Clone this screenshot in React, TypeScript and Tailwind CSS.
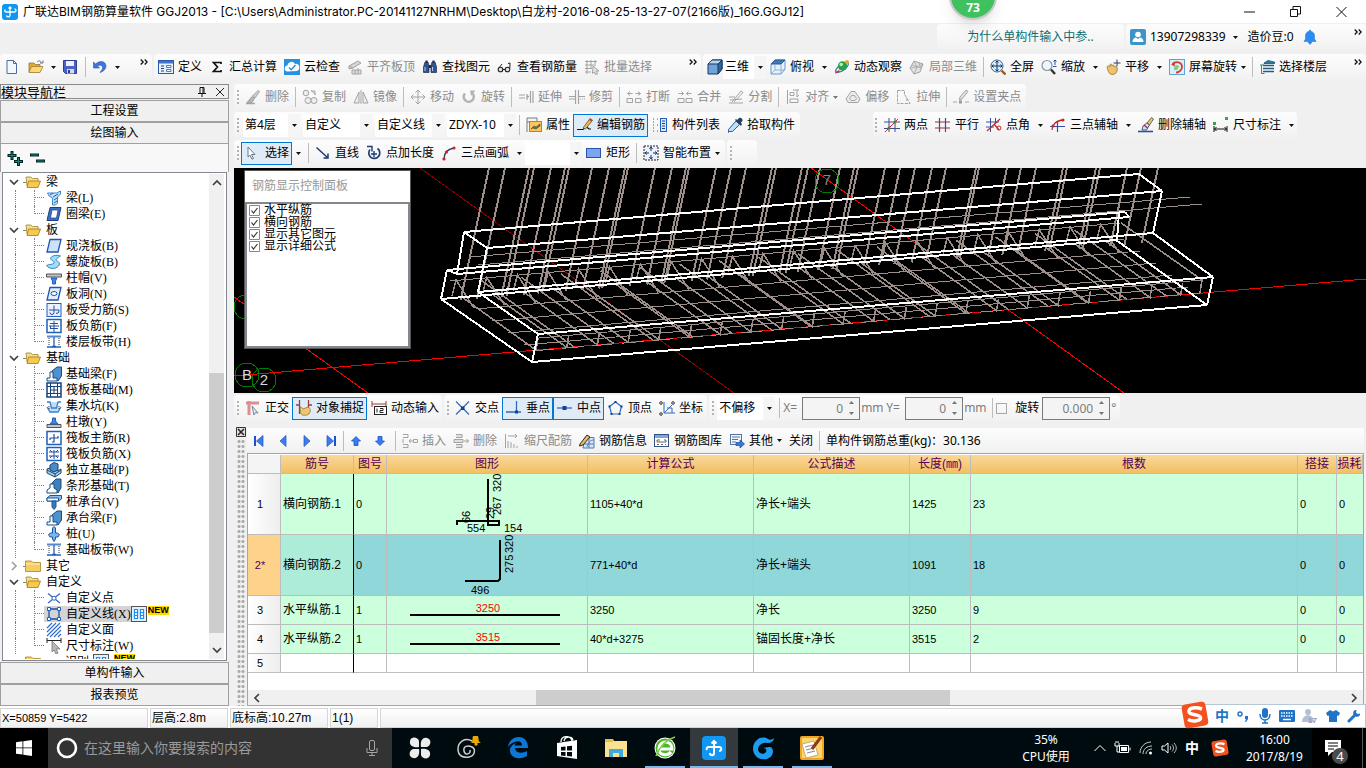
import { Fragment, ReactNode } from 'react'

const B = '#1f5fbf'
const N = '#1c3f7c'
const G = '#a3a3a3'
const R = '#c62828'

const glyphs: Record<string, ReactNode> = {
    logo: <><rect width="16" height="16" rx="3" fill="#1296f3" /><path d="M8 3v8.5a1.8 1.8 0 0 1-3.500 0M3.500 8h9a1.500 1.500 0 0 0 0-3M3.500 8a1.500 1.500 0 0 1 0-2.500M6.500 4.500 8 3l1.500 1.500" fill="none" stroke="#fff" strokeWidth="1.300" /></>,
    file: <path d="M3 1.500h6.500l3 3v10H3zM9.500 1.500v3h3" fill="#f3f8ff" stroke="#4d6b9e" />,
    open: <><path d="M1 4h5l1.500 1.500H12V13H1z" fill="#e3a83a" stroke="#8a6a20" strokeWidth=".7" /><path d="M3.500 7.500H15L12 13.500H1z" fill="#fbd974" stroke="#9a7626" strokeWidth=".7" /><path d="M9 3c2-2 4-1 4.500 1M12 4h3V1.500" fill="none" stroke="#59728f" /></>,
    save: <><path d="M1.500 1.500h13v13h-11l-2-2z" fill="#4b62c9" stroke="#2b3c91" /><path d="M4 2h8v5H4z" fill="#eef2ff" /><path d="M5 10h7v4.500H5z" fill="#d4d9ea" /><path d="M6 11h2v3H6z" fill="#2b3c91" /></>,
    undo: <path d="M1.500 3v6h6L5.500 7c3-2 6 0 5 2.500-.4 1.500-1.500 2.500-2.500 4 5-1.500 7-5.500 5.500-8.500C12 2 7.500 1.500 3.700 5z" fill="#3f76dd" stroke="#2450a8" strokeWidth=".6" />,
    define: <><rect x=".5" y="1.500" width="15" height="13" fill="#eaf2ff" stroke="#2d5aa8" /><path d="M1 2h14v2.500H1z" fill="#3f74c9" /><path d="M3 7h3M3 9.500h3M3 12h3" stroke={N} /><path d="M8.500 6.500H13v2H8.500zM8.500 10.500H13v2H8.500z" fill="#fff" stroke={B} strokeWidth=".8" /></>,
    sigma: <path d="M12 5V3.500H4.500l4 4.500-4 4.500H12V11" fill="none" stroke="#111" strokeWidth="1.700" />,
    cloud: <><rect width="16" height="16" fill="#2592e0" /><path d="M4 12.500a3 3 0 0 1-.5-6 4 4 0 0 1 7.500-1.500 3.500 3.500 0 0 1 1.500 7z" fill="#fff" /><path d="m5 8.500 2.200 2.200L11.500 6" fill="none" stroke="#2592e0" strokeWidth="1.500" /></>,
    slabtop: <><path d="m2 7 9-5 3 2-8 5zM2 7v3l4-1" fill="#d5d5d5" stroke={G} /><path d="M5 11h9v4H5zM8 11v4M11 9v6" fill="#ddd" stroke={G} /></>,
    binoc: <><path d="M3 3h3l1 4v6.500H1.500V8zM10 3h3l1.500 5v5.500H9V7z" fill="#35548c" stroke="#17294c" strokeWidth=".7" /><path d="M3.500 1.500h2v2h-2zM10.500 1.500h2v2h-2zM7 6h2v3H7z" fill="#17294c" /><path d="M3 8v4M10.500 8v4" stroke="#b7cbed" /></>,
    glasses: <><circle cx="3.500" cy="10.500" r="2.300" fill="#dbe6ef" stroke="#222" strokeWidth="1.100" /><circle cx="10.500" cy="10.500" r="2.300" fill="#dbe6ef" stroke="#222" strokeWidth="1.100" /><path d="M5.800 10.500h2.400M1.500 9.500 5 5M12.800 9.500 13 4l-2 .5" fill="none" stroke="#222" /></>,
    batch: <><path d="M1 2.500h12M1 6h9M1 9.500h7M1 13h6M3 1v14M7 1v9M11 1v6" stroke={G} fill="none" /><path d="m9 7 6 5h-3l1.500 3-2 .5L10 13l-1.500 1.500z" fill="#e3e3e3" stroke={G} /></>,
    cube: <><path d="M1 5 5 1h10v9l-4 5H1z" fill="#6fa3d8" stroke="#17375f" /><path d="M1 5 5 1h10l-4 4z" fill="#b6d4f1" stroke="#17375f" /><path d="M11 5v10l4-5V1z" fill="#2f659f" stroke="#17375f" /></>,
    cubetop: <><path d="M1 5 5 1h10v9l-4 5H1z" fill="#e7f1fb" stroke="#4e7fb5" strokeWidth=".8" /><path d="M1 5 5 1h10l-4 4z" fill="#4379b5" stroke="#2c5c93" /><path d="M11 5v10M5 5v6l-4 4M5 11h10" fill="none" stroke="#7aa5d3" strokeWidth=".8" /></>,
    orbit: <><ellipse cx="8" cy="8.500" rx="7.500" ry="3" transform="rotate(-35 8 8.500)" fill="none" stroke="#3d6fb5" strokeWidth="1.200" /><circle cx="8.500" cy="7" r="4.700" fill="#2ba14a" /><circle cx="7.200" cy="5.500" r="1.800" fill="#b5efb9" /><circle cx="13" cy="3" r="2" fill="#eda32e" /><path d="m1 13.500 4-2.500 1 1.500-4.500 2z" fill="#c03a30" /></>,
    local3d: <><path d="m1 9 4-7 9 3-3 8-6 2z" fill="#e2e2e2" stroke={G} /><path d="m3 6 9 3M5 2l3 6-3 7M9.500 3.500 12 9M1 9l7-1 6-3" fill="none" stroke={G} strokeWidth=".8" /></>,
    fullscreen: <><circle cx="7" cy="7" r="6" fill="#d7ebfa" stroke="#3e5f86" /><path d="M7 2v10M2 7h10M5.500 3.500 7 2l1.500 1.500M5.500 10.500 7 12l1.500-1.500M3.500 5.500 2 7l1.500 1.500M10.500 5.500 12 7l-1.500 1.500" fill="none" stroke="#16335f" /><path d="m11.500 11.500 4 4" stroke="#9a5b1e" strokeWidth="2.400" /></>,
    zoom: <><circle cx="6" cy="6.500" r="5" fill="#eef6fc" stroke="#8695a6" strokeWidth="1.200" /><path d="m10 10.500 4 4.500" stroke="#333" strokeWidth="2.400" /><path d="M14 1v5M12.500 2.500 14 1l1.500 1.500M12 7.500h3.500" fill="none" stroke="#163f8a" strokeWidth=".9" /></>,
    pan: <><path d="M2 8c1-2 2-1 3 0V5.500c1-1.500 2 0 2 1.500 1-2 2-1 2.200.5 1-1.500 2 0 2 1 1.300-.5 1.300 1 1 2.500C12 14 10 15.500 7 15.500S3 12 2 8z" fill="#ecc26e" stroke="#94651d" strokeWidth=".7" /><path d="M12 .5v7M8.500 4h7" stroke="#2a3e63" /></>,
    screenrot: <><rect x=".5" y=".5" width="15" height="15" fill="#d8effb" stroke="#5fa4cf" /><path d="M3.500 5c3-3.500 9.500-2 9.500 3 0 3-3 5.500-6 5.500" fill="none" stroke="#d43a2f" strokeWidth="1.800" /><path d="m2 5.500 4-2-.5 4z" fill="#d43a2f" /><path d="M5 8c2-3 5-2 5 0l-2 3H5z" fill="#8ec96f" /></>,
    floor: <><path d="M5 4 9 1.500 15.500 3v1.500H5z" fill="#2f7fa4" stroke="#153f57" strokeWidth=".7" /><path d="M4 6.500h11M4 9.500h11M4 12.500h11" stroke="#205f80" strokeWidth="1.700" /><path d="M1 6h4M2.500 6v8.500h3" fill="none" stroke="#2a9a4a" /></>,
    erase: <><path d="m13 1.500 1.500 1L10 9 7.500 7z" fill="#cfcfcf" stroke={G} /><path d="M7 7.500 9.500 9.500 7 13.500H2z" fill="#b5b5b5" stroke={G} /><path d="M1 14.500h9" stroke={G} strokeWidth="1.500" /></>,
    copy: <><circle cx="4" cy="4" r="2.800" fill="#eee" stroke={G} /><circle cx="6" cy="11.500" r="3" fill="#eee" stroke={G} /><circle cx="12" cy="11.500" r="3" fill="#eee" stroke={G} /><path d="M9 2h4v4M9 1l4.500 5" fill="none" stroke={G} /></>,
    mirror: <path d="M6 3v11H1zM10 3v11h5zM8 1v14" fill="#eee" stroke={G} />,
    move: <path d="M8 1v14M1 8h14M5.500 3.500 8 1l2.500 2.500M5.500 12.500 8 15l2.500-2.500M3.500 5.500 1 8l2.500 2.500M12.500 5.500 15 8l-2.500 2.500" fill="none" stroke={G} />,
    rotate: <><path d="M4 4.500a5 5 0 1 0 7.500 0" fill="none" stroke="#b3b3b3" strokeWidth="2.600" /><path d="M9 1.500h5.500L10 7z" fill="#b3b3b3" /></>,
    extend: <path d="M1 6h6M1 9h6M9 5v6M12.500 2v12M15 2v12M8.500 6l2 1.500-2 1.500" fill="none" stroke={G} strokeWidth="1.200" />,
    trim: <path d="M6.500 1v14M9.500 1v14M0 7.500h6.500M0 10h6.500M9.500 7.500H16M11 10h1M13 10h1M15 10h1" fill="none" stroke={G} strokeWidth="1.200" />,
    split: <path d="M1 9.500h5.500v4H1zM15 9.500H9.500v4H15zM1.500 4.500h5M9.500 4.500h5M4 2.500l-2.500 2L4 6.500M12 2.500l2.500 2-2.500 2" fill="none" stroke={G} />,
    merge: <path d="M1 9.500h6v4H1zM15 9.500H9v4h6zM1.500 4.500h5M9.500 4.500h5M4.500 2.500l2 2-2 2M11.500 2.500l-2 2 2 2" fill="none" stroke={G} />,
    divide: <path d="M1 14h14M2 11l12-1M4 13l9-11 2 1.500L6 13M1 8h6" fill="none" stroke={G} />,
    align: <path d="M2.500 1v14M5 3.500h4v3H5zM5 10h8v3.500H5zM8 1h6M12 1v7l2-2" fill="none" stroke={G} />,
    offset: <path d="M6 2.500h4L15 10l-2 3.500H3L1 10zM6.500 6.500h3l2 3-1.500 2H6l-1.500-2z" fill="#ececec" stroke={G} />,
    stretch: <path d="M1.500 1.500h7v5M1.500 1.500v13h6M9 6l5 8.500H8M11 9v3" fill="none" stroke={G} strokeDasharray="3 1" />,
    gripset: <><path d="m7 8 6-7 2 1.500L9 10l-2.500 1z" fill="#e2e2e2" stroke={G} /><path d="M0 13h4M12 13h4" stroke={G} /><path d="M6 11.500h3v3H6z" fill="#999" /></>,
    prop: <><path d="M1 1h10v4H1zM1 5v10" fill="#f5f5f5" stroke="#7a7a7a" /><rect x="3.500" y="4.500" width="12" height="10" fill="#ffc45f" stroke="#c97c1d" /><path d="m5 12 3-3 2 1 4-3v2l-4 3-3-1z" fill="#5d7f4c" stroke="#3a4c2d" strokeWidth=".6" /></>,
    pencil: <><path d="M0 12.500h6l3-3 3 2.500h2" fill="none" stroke="#111" strokeWidth="1.200" /><path d="M6 11 13 1.500l2.500 1.800L8.500 12z" fill="#eebc55" stroke="#5f4a20" strokeWidth=".8" /><path d="m12 3 2.500 1.700L15.500 3 13 1.500z" fill="#c9463a" /></>,
    list: <><path d="M1 2h2M1 5h2M1 8h2M1 11h2M1 14h2M5 2h1.500M5 8h1.500M5 14h1.500" stroke="#555" strokeDasharray="1 1" /><rect x="8.500" y="1.500" width="6" height="13" fill="#dbe9ff" stroke={B} /><path d="M10 4h3M10 6.500h3M10 9h3M10 11.500h3" stroke={N} /></>,
    pipette: <><path d="m9 4 3.500 3.500-7 7H2.500l-1 1v-3z" fill="#bfe0f8" stroke="#2a5b94" /><path d="m8 3 6 6 1-2-1.200-1.200L15.500 4c.5-2-1.500-3.800-3.500-3L10.200 3 9 2z" fill="#23405f" /></>,
    twopt: <><path d="M0 5h16M0 11.500h16M5 1v14M11 1v14" stroke="#444b8a" /><path d="m1 15 13-13" stroke={R} /><circle cx="5" cy="11" r="1.500" fill="#3a8a2c" /><circle cx="11" cy="5" r="1.500" fill="#3a8a2c" /></>,
    parallel: <><path d="M4.500 1v14M10.500 1v14" stroke="#3a4fa3" strokeWidth="1.200" /><path d="M0 5h15M0 11h15" stroke="#8d3144" strokeWidth="1.200" /></>,
    ptangle: <><path d="M0 5h13M0 10h8M4.500 1v14M9.500 1v6" stroke="#3a4fa3" /><path d="M1 14 14 2M8 7l5 6" stroke={R} strokeWidth="1.200" /><circle cx="13" cy="11" r="2" fill="none" stroke={R} /></>,
    axis3: <><path d="M0 9.500h15M7.500 4v11" stroke="#3a4fa3" strokeWidth="1.200" /><path d="M2 13c0-5 4-9.500 11-10" fill="none" stroke={R} strokeWidth="1.300" /><circle cx="13" cy="3" r="1.500" fill={R} /><circle cx="3" cy="9" r="1.500" fill={R} /></>,
    brush: <><path d="m9 6 4.500-5.500 2 1.500L11.500 8z" fill="#efc66b" stroke="#333" strokeWidth=".7" /><path d="m5 9 4-3 2.500 2-3 5H4z" fill="#d2dff8" stroke="#26385c" strokeWidth=".8" /><path d="m6 8 3.500 3" stroke={R} strokeWidth="1.500" /><path d="M0 14.500h15" stroke="#24569e" strokeWidth="1.600" /></>,
    dim: <><path d="M1 9v6M14 9v6M1 12h13M3.500 10l-2 2 2 2M11.500 10l2 2-2 2" fill="none" stroke="#111" /><path d="M0 5h3v3H0zM12 0h3v3h-3z" fill="#36a83a" /></>,
    cursor: <path d="m3 2 7 7.500H6.500l2 4-1.500.7-2-4L3 12z" fill="#fff" stroke="#68788c" />,
    line: <path d="M1.500 2.500 13 13M13 8.500V13H8.500" fill="none" stroke="#1c3c73" strokeWidth="1.500" />,
    ptlen: <><path d="M11.500 3.500A5.500 5.500 0 1 1 4 4.500" fill="none" stroke="#1c3c73" strokeWidth="1.700" /><path d="M1 1.500h5v5M8 6v6M5 9h6" fill="none" stroke="#1c3c73" strokeWidth="1.400" /></>,
    arc: <><path d="M3 14c0-6 4-10 10-11" fill="none" stroke="#1c3c73" strokeWidth="1.400" /><circle cx="3" cy="14" r="1.600" fill={R} /><circle cx="5.500" cy="7" r="1.600" fill={R} /><circle cx="13" cy="3" r="1.600" fill={R} /></>,
    rect: <rect x=".5" y="3.500" width="14" height="9" fill="#7da4ee" stroke="#2a53ad" />,
    smart: <><rect x="1" y="1" width="14" height="14" fill="#eaf1fb" stroke="#222" strokeDasharray="2 1" /><path d="M8 2v4M8 10v4M2 8h4M10 8h4M6.500 4 8 2l1.500 2M6.500 12 8 14l1.500-2M4 6.500 2 8l2 1.500M12 6.500 14 8l-2 1.500" fill="none" stroke="#17386d" /></>,
    ortho: <><path d="M1 3h13M4 1v14" stroke="#dc8f8f" strokeWidth="3" /><path d="m7 6 6 7-2.500-.5L9 15z" fill="#dfe8f5" stroke="#5c7190" strokeWidth=".8" /></>,
    snap: <><path d="M3.500 0v14M12.500 0v14M0 5h4M12 5h4" stroke="#a33b3b" strokeWidth="1.300" /><path d="M4 7c2 0 2 1 3 2l5-2c3 1 3 6 0 7.500-3 1.500-7 1-7.500-2z" fill="#f0c56e" stroke="#8d6522" strokeWidth=".7" /></>,
    dyn: <><path d="M1 1v6M15 1v6M1 4h14" stroke="#a33b3b" /><rect x="3.500" y="6.500" width="12" height="8" fill="#fff" stroke="#222" /><path d="M6 8.500v4M9 8.500h3v2H9v2h3.500" fill="none" stroke="#222" /></>,
    cross: <><path d="m1 1.500 13 13M14 1.500l-13 13" stroke="#3c6fb7" strokeWidth="1.300" /><path d="M6 6.500h3.500V10H6z" fill="#17408f" /></>,
    perp: <><path d="M0 12h15M10.500 1v12" stroke="#2f6bc0" strokeWidth="1.300" /><path d="M9 10.500h3v3H9z" fill="#17408f" /></>,
    mid: <><path d="M0 8h15" stroke="#2f6bc0" strokeWidth="1.300" /><path d="M5.500 6h4v4h-4z" fill="#17408f" /></>,
    vertex: <><path d="m7.500 2 6 4.500-2 7.500h-8l-2-7.500z" fill="none" stroke="#2f6bc0" strokeWidth="1.200" /><path d="M6.500 1h2v2h-2zM.5 5.500h2v2h-2zM12.500 5.500h2v2h-2zM2.500 13h2v2h-2zM10.500 13h2v2h-2z" fill="#17408f" /></>,
    coord: <><path d="M5 2v11h11M5 13 13 5M8 8h5v5" fill="none" stroke="#2f6bc0" /><circle cx="2" cy="3" r="1.300" fill="none" stroke="#333" /><circle cx="14" cy="3" r="1.300" fill="none" stroke="#333" /><circle cx="2" cy="14" r="1.300" fill="none" stroke="#333" /></>,
    first: <><path d="M4 3v10" stroke="#1c52c7" strokeWidth="2" /><path d="M12 2.500v11L5.500 8z" fill="#3c7ded" stroke="#1c52c7" strokeWidth=".7" /></>,
    prev: <path d="M11 2.500v11L5 8z" fill="#3c7ded" stroke="#1c52c7" strokeWidth=".7" />,
    next: <path d="M5 2.500v11L11 8z" fill="#3c7ded" stroke="#1c52c7" strokeWidth=".7" />,
    last: <><path d="M12 3v10" stroke="#1c52c7" strokeWidth="2" /><path d="M4 2.500v11L10.500 8z" fill="#3c7ded" stroke="#1c52c7" strokeWidth=".7" /></>,
    up: <path d="M8 3.500 12.500 8H10v4.500H6V8H3.500z" fill="#3c7ded" stroke="#1c52c7" strokeWidth=".8" />,
    down: <path d="M8 12.500 3.500 8H6V3.500h4V8h2.500z" fill="#3c7ded" stroke="#1c52c7" strokeWidth=".8" />,
    insert: <path d="M1 1.500h5v3H1M1 11.500h5v3H1M1 6v4M7 8h4M9 6 7 8l2 2M11.500 6.500h4v3h-4z" fill="none" stroke={G} />,
    remove: <path d="M3 1.500h6v3H3M3 11.500h6v3H3M1 6.500h9v3H1zM11 8h4.500M13.500 6l2 2-2 2" fill="#e0e0e0" stroke={G} />,
    scale: <path d="M1.500 1v14M4 3h9M11 1l2 2-2 2M4 8v7M7 9v6M10 11v4M13 13v2" fill="none" stroke={G} />,
    info: <><path d="M6 4.500h9V15H4z" fill="#d8e6f8" stroke="#4f7cb5" /><path d="M5 11h10M10 5v10M15 7c-4 0-6 3-7 7" fill="none" stroke="#4f7cb5" /><path d="m1 11 7-9 3 2-7 8-3.500 1z" fill="#e9ba5c" stroke="#2c2c2c" /></>,
    gallery: <><rect x=".5" y="1.500" width="14" height="12" fill="#fff" stroke="#33527f" /><path d="M1 2h13v3H1z" fill="#7da5dd" /><path d="M3 7h3M3 7v2h9V7h-2M3 11.500h2M7 11.500h2M11 11.500h1" fill="none" stroke="#666" /></>,
    other: <><rect x="1.500" y="1.500" width="11" height="10" fill="#f2f6fc" stroke="#54739f" /><path d="M3 4h8M3 6.500h6M3 9h4" stroke="#54739f" /><path d="M7 9.500h4V7l4.500 4-4.500 4v-2.500H7z" fill="#3a78d9" stroke="#1c478e" strokeWidth=".7" /></>,
    folder: <><path d="M.5 3h6L8 4.500h7.500V13.500H.5z" fill="#f6cd62" stroke="#a88428" strokeWidth=".8" /><path d="M1 6h14" stroke="#fff0b8" /></>,
    folderopen: <><path d="M1 3h5l1.500 1.500H13V12H2z" fill="#f4dc94" stroke="#a88428" strokeWidth=".8" /><path d="M3.500 7H15.500L13 13.500H2z" fill="#f9c94c" stroke="#9c7720" strokeWidth=".8" /></>,
    beam: <><path d="M1.500 3h9l4-2v3l-3 3v6l-2 2H6.500V8L3 6z" fill="#bfe0f8" stroke="#3e86c8" /><path d="m4 5 3-2M7 7l5-3M8 10l3-2M8 13l3-2" stroke="#1763b2" /></>,
    ring: <><path d="M4 1.500h11L12 14.500H1z" fill="#3e6fc0" stroke="#1b3f87" /><path d="M6 4h6l-1.500 8H4.500z" fill="#fff" stroke="#1b3f87" strokeWidth=".7" /></>,
    slab: <path d="M4 1.500h11L12 14H1z" fill="#cfe1f8" stroke="#1f56b0" strokeWidth="1.300" />,
    spiral: <path d="M14.500 2C9 0 3 3 5 5.500 6 7 9 7 8 9c-1.500 2-5 1-7.500 2.500 2 3.500 9 4 12 .5 2.500-3-.5-4.500-2-5.500C9 5 12 3.500 14.500 2z" fill="#a5dcf5" stroke="#2488c9" />,
    capcol: <><path d="M.5 4h15v3H.5z" fill="#c4c4c4" stroke="#555" /><path d="M5 8h6l-1.500 3v3h-3v-3z" fill="#3f86de" stroke={B} /></>,
    hole: <><path d="M4 1.500h11L12 14H1z" fill="#e2eefc" stroke="#1f56b0" strokeWidth="1.300" /><ellipse cx="8" cy="7.500" rx="3" ry="2" fill="#fff" stroke="#1f56b0" /></>,
    rebarS: <><rect x="1" y="1.500" width="14" height="13" fill="#e8f1fd" stroke={B} /><path d="M3 8h10M8 3.500v7a2 2 0 0 1-4 0M13 8c0 3-1.500 4-3 3" fill="none" stroke="#244f9b" /></>,
    rebarF: <><rect x="1" y="1.500" width="14" height="13" fill="#fff" stroke={B} strokeWidth="1.500" /><path d="M4 5.500h8M4 10.500h8M8 3v11M3 8h10M4.500 8v2.500" fill="none" stroke="#244f9b" /></>,
    strip: <><path d="M1 2.500h14M1 13h14" stroke="#5489cf" strokeWidth="2" /><path d="M3 4v8M13 4v8" stroke="#333" strokeDasharray="1 1" /><path d="M8 3v10M6 12.500h4" stroke={B} strokeWidth="1.300" /></>,
    fbeam: <><path d="M6 11V5l5-4h4.500v9L12 15z" fill="#4e92cd" stroke="#164f86" /><path d="M1 15v-3h3V6h3v6h4v3z" fill="#fff" stroke="#164f86" /></>,
    raft: <><rect x="1" y="1" width="14" height="14" fill="#fff" stroke="#163f7c" strokeWidth="1.500" /><path d="M1 4.500h14M1 11.500h14M4.500 1v14M11.500 1v14M4.500 8h7M8 4.500v7" stroke="#163f7c" /></>,
    pit: <><path d="M1 4h3l1.500 6h5L12 4h3M1 9l3 5h8l3-5" fill="#c2def7" stroke="#3680cb" strokeWidth="1.300" /><path d="M3 8v3M13 8v3" stroke="#333" strokeDasharray="1 1" /></>,
    pier: <><path d="M1 13.500h14v-3H1z" fill="#c4c4c4" stroke="#555" /><path d="M4 10h8l-2.500-3V4h-3v3z" fill="#3f86de" stroke={B} /></>,
    rebarR: <><rect x="1" y="1.500" width="14" height="13" fill="#fff" stroke={B} strokeWidth="1.500" /><path d="M4 8h8v-2M8 4v8H6M4 8v2" fill="none" stroke="#244f9b" strokeWidth="1.200" /></>,
    rebarX: <><rect x="1" y="1.500" width="14" height="13" fill="#fff" stroke={B} strokeWidth="1.500" /><path d="M3 6h10M3 10h10M8 4v9M4 4l2 2M12 4l-2 2M4 12l2-2M12 12l-2-2" fill="none" stroke="#244f9b" /></>,
    isolate: <><path d="m1 7 3-1 8 3 3-2v4l-6 4-8-4z" fill="#a9d0f0" stroke="#17466f" /><path d="m4 3 4-2.500L12 2v6L8 10 4 8z" fill="#4c8ac4" stroke="#17466f" /><path d="m1 8 8 4 6-4M9 12v3" fill="none" stroke="#17466f" /></>,
    stripf: <><path d="M6 10V5l4-4h5v9l-3 5z" fill="#3f80bd" stroke="#164f86" /><path d="M1 15v-3l3-2V6h4v4l3 2v3z" fill="#fff" stroke="#164f86" /></>,
    pilecap: <><path d="M1 4 4 1.500h11.500V5l-3 2H1z" fill="#8fc0ee" stroke="#1b5799" /><path d="M1 4h11.500v3H1z" fill="#fff" stroke="#1b5799" /><path d="M6 7h4v6l-2 2.500L6 13z" fill="#3a78c4" stroke="#1b5799" /></>,
    pile: <path d="M6.500 2 8 .5 9.500 2v5h2l2 1.500L12 11H9.500v2L8 15.500 6.500 13v-2H4L2.500 8.500 4.500 7h2z" fill="#7db4ea" stroke="#1c55a0" />,
    cpoint: <><path d="M2 3.500 14 13M14 3.500 2 13" stroke="#2c69be" strokeWidth="1.200" /><circle cx="8" cy="8.200" r="2" fill="#fff" stroke="#2c69be" /></>,
    cline: <><path d="M3 3h10v10H3z" fill="none" stroke="#1f4f9f" strokeWidth="1.300" /><path d="M1.500 1.500h3v3h-3zM11.500 1.500h3v3h-3zM1.500 11.500h3v3h-3zM11.500 11.500h3v3h-3z" fill="#fff" stroke={B} /></>,
    cface: <path d="m1 6 5-5M1 10l9-9M1 14l13-13M4 15 15 4M8 15l7-7M12 15l3-3" stroke="#2f6bc9" strokeWidth="1.100" />,
    dimcur: <><path d="M1 0v5M15 0v5M1 2.500h14" stroke="#222" /><path d="m6 3 8 8h-4l2 4-2 1-2-4-2 2z" fill="#b9b9b9" stroke="#777" strokeWidth=".8" /></>,
    grid: <><rect x=".5" y=".5" width="15" height="15" fill="#dff0ff" stroke="#555" /><path d="M3.500 3.500h3v9h-3zM9.500 3.500h3v9h-3zM3 6.500h4M3 9.500h4M9 6.500h4M9 9.500h4" fill="#fff" stroke="#1e8df0" strokeWidth="1.200" /></>,
    user: <><rect width="16" height="16" rx="2" fill="#3c95c8" /><circle cx="8" cy="5.500" r="2.800" fill="#fff" /><path d="M2.500 13c0-3 2-4.500 3.500-4.500L8 10l2-1.500c1.500 0 3.500 1.500 3.500 4.500z" fill="#fff" /></>,
    bell: <path d="M7.500 1h1v1.200c3 .5 4 2.500 4 5V10l1.500 2.500H2L3.500 10V7c0-2.500 1-4.300 4-4.800zM6 13h4l-2 2.500z" fill="#2a8bf0" stroke="#1b6fd0" strokeWidth=".5" />,
}

function Glyph({ name, className = 'size-4' }: { name: string; className?: string }) {
    return <svg viewBox="0 0 16 16" className={`${className} shrink-0`} aria-hidden="true">{glyphs[name]}</svg>
}

function Arrow({ dim }: { dim?: boolean }) {
    return <svg viewBox="0 0 5 3" className="h-[3px] w-[5px] shrink-0" aria-hidden="true"><path d="M0 0h5L2.500 3z" fill={dim ? '#777' : '#111'} /></svg>
}

function Grip() {
    return (
        <span className="flex w-[7px] shrink-0 flex-col items-center gap-0.5">
            {[0, 1, 2, 3].map((i) => <i key={i} className="size-0.5 bg-[#b4b4b4]" />)}
        </span>
    )
}

function Sep({ tight }: { tight?: boolean }) {
    return <span className={`h-5 w-px shrink-0 bg-[#bdbdbd] ${tight ? '' : 'mr-0.5 ml-[3px]'}`} />
}

function Bar({ children, className = '' }: { children: ReactNode; className?: string }) {
    return <div className={`flex h-[26px] shrink-0 items-center rounded-sm bg-linear-to-b from-[#fdfdfd] to-[#f1f1f1] ${className}`}>{children}</div>
}

type ToolProps = { icon?: string; label: string; off?: boolean; on?: boolean; menu?: 'wide' | 'tight' }

function Tool({ icon, label, off, on, menu }: ToolProps) {
    return (
        <button disabled={off} className={`flex h-[23px] shrink-0 items-center gap-1 pr-[3px] pl-1 ${off ? 'text-[#8b8b8b]' : ''} ${on ? 'bg-[#dfebf6] ring-1 ring-[#0078d7] ring-inset' : ''}`}>
            {icon && <Glyph name={icon} />}
            <span>{label}</span>
            {menu && <span className={menu === 'wide' ? 'flex w-[9px] justify-end' : 'flex w-[5px]'}><Arrow dim={off} /></span>}
        </button>
    )
}

function Tools({ items }: { items: (ToolProps | '|')[] }) {
    return <>{items.map((it, i) => (it === '|' ? <Sep key={i} /> : <Tool key={i} {...it} />))}</>
}

function Combo({ label, value, className }: { label: string; value: string; className: string }) {
    return (
        <label className={`flex h-[23px] shrink-0 items-center bg-white ${className}`}>
            <select aria-label={label} defaultValue={value} className="h-full min-w-0 flex-1 appearance-none bg-transparent pl-0.5 outline-none">
                <option>{value}</option>
            </select>
            <span className="flex h-full w-3 items-center justify-center bg-[#f5f5f5]"><Arrow /></span>
        </label>
    )
}

function Spin({ label, value, className }: { label: string; value: string; className: string }) {
    return (
        <span className={`flex h-[23px] shrink-0 items-center border border-[#7a7a7a] bg-[#f4f4f4] ${className}`}>
            <input aria-label={label} defaultValue={value} className="h-full min-w-0 flex-1 bg-transparent text-right text-[#7d7d7d] outline-none" />
            <span className="flex w-4 flex-col items-center gap-2">
                <i className="rotate-180"><Arrow dim /></i>
                <Arrow dim />
            </span>
        </span>
    )
}

function More() {
    return (
        <button aria-label="更多" className="mt-[5px] self-start">
            <svg viewBox="0 0 8 6" className="h-1.5 w-2"><path d="m.7.5 2.500 2.500-2.500 2.500M4.700.5 7.200 3 4.700 5.500" fill="none" stroke="#111" strokeWidth="1.300" /></svg>
        </button>
    )
}

const windowIcons = [
    { label: '最小化', d: 'M0 6h11' },
    { label: '还原', d: 'M.5 3.500h7v7h-7zM3 3V.5h7.500V8H8' },
    { label: '关闭', d: 'M.5 1l10 10M10.500 1l-10 10' },
]

function TitleBar() {
    return (
        <header className="flex h-[23px] shrink-0 items-center bg-white pr-0.5 pl-0.5">
            <Glyph name="logo" />
            <h1 className="ml-[5px] flex-1 font-[Inter,'Noto_Sans_CJK_SC',sans-serif]">广联达BIM钢筋算量软件 GGJ2013 - [C:\Users\Administrator.PC-20141127NRHM\Desktop\白龙村-2016-08-25-13-27-07(2166版)_16G.GGJ12]</h1>
            {windowIcons.map((w) => (
                <button key={w.label} aria-label={w.label} className="flex w-[46px] justify-center">
                    <svg viewBox="0 0 11 12" className="h-3 w-[11px]"><path d={w.d} fill="none" stroke="#111" /></svg>
                </button>
            ))}
        </header>
    )
}

function AccountRow() {
    return (
        <div className="flex h-[31px] shrink-0 justify-end gap-0.5 pt-px">
            <Bar className="h-7 w-[187px] justify-center"><a href="#faq" className="text-[#0c6e72]">为什么单构件输入中参..</a></Bar>
            <Bar className="h-7 w-[240px] gap-1 pl-1">
                <Glyph name="user" />
                <button className="flex items-center gap-[7px]">13907298339 <Arrow /></button>
                <span className="ml-1.5">造价豆:0</span>
                <Glyph name="bell" className="ml-1 size-4" />
                <span className="ml-auto flex h-full pr-1"><More /></span>
            </Bar>
        </div>
    )
}

function MainToolbar() {
    return (
        <div className="flex h-[30px] shrink-0 gap-0.5">
            <Bar className="h-7 w-[152px] pl-1">
                <button aria-label="新建" className="pr-2"><Glyph name="file" /></button>
                <button aria-label="打开" className="flex items-center gap-[7px] pr-1.5"><Glyph name="open" /><Arrow /></button>
                <button aria-label="保存" className="pr-1"><Glyph name="save" /></button>
                <Sep />
                <button aria-label="撤销" className="flex items-center gap-[7px] pl-1"><Glyph name="undo" /><Arrow /></button>
                <span className="ml-auto flex h-full pr-1"><More /></span>
            </Bar>
            <Bar className="h-7 w-[547px]">
                <Tools items={[
                    { icon: 'define', label: '定义' },
                    { icon: 'sigma', label: '汇总计算' },
                    { icon: 'cloud', label: '云检查' },
                    { icon: 'slabtop', label: '平齐板顶', off: true },
                    { icon: 'binoc', label: '查找图元' },
                    { icon: 'glasses', label: '查看钢筋量' },
                    { icon: 'batch', label: '批量选择', off: true },
                ]} />
                <span className="ml-auto flex h-full pr-1"><More /></span>
            </Bar>
            <Bar className="h-7 flex-1 pl-1">
                <Glyph name="cube" />
                <Combo label="视图" value="三维" className="w-[43px]" />
                <Tools items={[
                    { icon: 'cubetop', label: '俯视', menu: 'wide' },
                    { icon: 'orbit', label: '动态观察' },
                    { icon: 'local3d', label: '局部三维', off: true },
                    '|',
                    { icon: 'fullscreen', label: '全屏' },
                    { icon: 'zoom', label: '缩放', menu: 'wide' },
                    { icon: 'pan', label: '平移', menu: 'wide' },
                    { icon: 'screenrot', label: '屏幕旋转', menu: 'tight' },
                    '|',
                    { icon: 'floor', label: '选择楼层' },
                ]} />
                <span className="ml-auto flex h-full pr-1"><More /></span>
            </Bar>
        </div>
    )
}

function EditToolbars() {
    return (
        <>
            <div className="flex h-7 shrink-0">
                <Bar className="pr-0.5">
                    <Grip />
                    <Tools items={[
                        { icon: 'erase', label: '删除', off: true }, '|',
                        { icon: 'copy', label: '复制', off: true },
                        { icon: 'mirror', label: '镜像', off: true }, '|',
                        { icon: 'move', label: '移动', off: true },
                        { icon: 'rotate', label: '旋转', off: true }, '|',
                        { icon: 'extend', label: '延伸', off: true },
                        { icon: 'trim', label: '修剪', off: true }, '|',
                        { icon: 'split', label: '打断', off: true },
                        { icon: 'merge', label: '合并', off: true },
                        { icon: 'divide', label: '分割', off: true }, '|',
                        { icon: 'align', label: '对齐', off: true, menu: 'tight' },
                        { icon: 'offset', label: '偏移', off: true },
                        { icon: 'stretch', label: '拉伸', off: true }, '|',
                        { icon: 'gripset', label: '设置夹点', off: true },
                    ]} />
                </Bar>
            </div>
            <div className="flex h-7 shrink-0">
                <Bar className="pr-0.5">
                    <Grip />
                    <span className="ml-0.5 flex items-center gap-[3px]">
                        <Combo label="楼层" value="第4层" className="w-[57px]" />
                        <Combo label="构件类型" value="自定义" className="w-[69px]" />
                        <Combo label="构件种类" value="自定义线" className="w-[69px]" />
                        <Combo label="构件" value="ZDYX-10" className="w-[69px]" />
                    </span>
                    <Tools items={[
                        '|',
                        { icon: 'prop', label: '属性' },
                        { icon: 'pencil', label: '编辑钢筋', on: true },
                        { icon: 'list', label: '构件列表' },
                        { icon: 'pipette', label: '拾取构件' },
                    ]} />
                </Bar>
                <Bar className="mr-[69px] ml-auto">
                    <Grip />
                    <Tools items={[
                        { icon: 'twopt', label: '两点' },
                        { icon: 'parallel', label: '平行' },
                        { icon: 'ptangle', label: '点角', menu: 'wide' },
                        { icon: 'axis3', label: '三点辅轴', menu: 'wide' },
                        { icon: 'brush', label: '删除辅轴' },
                        { icon: 'dim', label: '尺寸标注', menu: 'wide' },
                    ]} />
                </Bar>
            </div>
            <div className="flex h-7 shrink-0 gap-0.5">
                <Bar className="pr-0.5">
                    <Grip />
                    <Tools items={[{ icon: 'cursor', label: '选择', on: true }]} />
                    <button aria-label="选择方式" className="px-1"><Arrow /></button>
                    <Tools items={[
                        '|',
                        { icon: 'line', label: '直线' },
                        { icon: 'ptlen', label: '点加长度' },
                        { icon: 'arc', label: '三点画弧', menu: 'wide' },
                    ]} />
                    <Combo label="半径" value="" className="w-[57px]" />
                    <Tools items={[
                        { icon: 'rect', label: '矩形' }, '|',
                        { icon: 'smart', label: '智能布置', menu: 'tight' },
                    ]} />
                </Bar>
                <Bar className="w-[30px]"><Grip /></Bar>
            </div>
        </>
    )
}

type Leaf = [icon: string, label: string]
const tree: { label: string; leaves: Leaf[] }[] = [
    { label: '梁', leaves: [['beam', '梁(L)'], ['ring', '圈梁(E)']] },
    { label: '板', leaves: [['slab', '现浇板(B)'], ['spiral', '螺旋板(B)'], ['capcol', '柱帽(V)'], ['hole', '板洞(N)'], ['rebarS', '板受力筋(S)'], ['rebarF', '板负筋(F)'], ['strip', '楼层板带(H)']] },
    { label: '基础', leaves: [['fbeam', '基础梁(F)'], ['raft', '筏板基础(M)'], ['pit', '集水坑(K)'], ['pier', '柱墩(Y)'], ['rebarR', '筏板主筋(R)'], ['rebarX', '筏板负筋(X)'], ['isolate', '独立基础(P)'], ['stripf', '条形基础(T)'], ['pilecap', '桩承台(V)'], ['fbeam', '承台梁(F)'], ['pile', '桩(U)'], ['strip', '基础板带(W)']] },
    { label: '其它', leaves: [] },
    { label: '自定义', leaves: [['cpoint', '自定义点'], ['cline', '自定义线(X)'], ['cface', '自定义面'], ['dimcur', '尺寸标注(W)']] },
]

const NewTag = () => <b className="ml-px h-[9px] self-start bg-[#ffd800] font-['Liberation_Sans'] text-[9px] leading-[9px] font-bold">NEW</b>

function Chevron({ open, className = '' }: { open?: boolean; className?: string }) {
    return <svg viewBox="0 0 10 10" className={`size-2.5 shrink-0 ${className}`} aria-hidden="true"><path d={open ? 'M1 3l4 4 4-4' : 'M3 1l4 4-4 4'} fill="none" stroke={open ? '#404040' : '#a0a0a0'} strokeWidth="1.700" /></svg>
}

function Tree() {
    return (
        <div className="mx-0.5 flex min-h-0 flex-1 border border-[#828790] bg-white pt-px pr-0.5 pb-px">
            <ul className="min-w-0 flex-1 overflow-hidden font-[Liberation_Serif,'Noto_Sans_CJK_SC',serif] leading-4">
                {tree.map((group) => (
                    <li key={group.label}>
                        <div className="flex h-4 items-center pl-1.5">
                            <Chevron open={group.leaves.length > 0} />
                            <i className="ml-1 w-0.5 border-b border-dotted border-[#808080]" />
                            <Glyph name={group.leaves.length ? 'folderopen' : 'folder'} />
                            <span className="ml-[5px]">{group.label}</span>
                        </div>
                        <ul>
                            {group.leaves.map(([icon, label], i) => {
                                const selected = label === '自定义线(X)'
                                return (
                                    <li key={label} className="flex h-4 items-center pl-3">
                                        <i className="h-full w-[19px] border-l border-dotted border-[#808080]" />
                                        <i className={`flex h-full w-2.5 flex-col ${i < group.leaves.length - 1 ? 'border-l border-dotted border-[#808080]' : ''}`}>
                                            <i className={`h-1/2 border-b border-dotted border-[#808080] ${i === group.leaves.length - 1 ? 'border-l' : ''}`} />
                                        </i>
                                        <span className={`flex items-center gap-1 pl-0.5 ${selected ? 'bg-[#d4d4d4]' : ''}`}>
                                            <Glyph name={icon} />{label}
                                        </span>
                                        {selected && <><Glyph name="grid" /><NewTag /></>}
                                    </li>
                                )
                            })}
                        </ul>
                    </li>
                ))}
                <li className="flex h-4 items-center gap-1 pl-[22px]"><Glyph name="folder" /><span className="pl-5">识别</span><Glyph name="grid" /><NewTag /></li>
            </ul>
            <div className="flex w-[15px] flex-col items-center bg-[#f0f0f0]">
                <Chevron open className="my-1 rotate-180" />
                <div className="flex w-full flex-1 flex-col justify-end"><div className="h-[59%] bg-[#cdcdcd]" /></div>
                <Chevron open className="mt-3 mb-1" />
            </div>
        </div>
    )
}

const navButton = 'h-[22px] w-full shrink-0 border border-[#a0a0a0] bg-[#f0f0f0] text-center'

function Sidebar() {
    return (
        <aside className="flex w-[229px] shrink-0 flex-col">
            <div className="flex h-[15px] items-center border border-[#8a8a8a] leading-3">
                <h2 className="flex-1 text-[13px]">模块导航栏</h2>
                <button aria-label="固定" className="mr-2.5"><svg viewBox="0 0 8 10" className="h-2.5 w-2"><path d="M2 .5h4V6M2 .5V6M5 1v5M0 6.500h8M4 7v3" fill="none" stroke="#111" /></svg></button>
                <button aria-label="关闭导航栏" className="mr-1"><svg viewBox="0 0 8 8" className="size-2"><path d="m0 0 8 8M8 0 0 8" stroke="#222" /></svg></button>
            </div>
            <button className={`${navButton} mt-px`}>工程设置</button>
            <button className={navButton}>绘图输入</button>
            <div className="flex h-[28px] shrink-0 items-center gap-1.5 border-x border-[#a0a0a0] bg-[#f8f8f8] pl-1.5">
                <button aria-label="全部展开"><svg viewBox="0 0 16 15" className="h-[15px] w-4"><path d="M5 0v9M.500 4.500h9M11.500 6v9M7 10.500h9" stroke="#022" strokeWidth="3" /><path d="M5 1v7M1.500 4.500h7M11.500 7v7M8 10.500h7" stroke="#12897c" /></svg></button>
                <button aria-label="全部折叠"><svg viewBox="0 0 16 15" className="h-[15px] w-4"><path d="M1 4h9M7 10h9" stroke="#022" strokeWidth="3" /><path d="M2 4h7M8 10h7" stroke="#12897c" /></svg></button>
            </div>
            <Tree />
            <button className={`${navButton} mt-px`}>单构件输入</button>
            <button className={navButton}>报表预览</button>
        </aside>
    )
}

type Pt = [number, number]
const white: [Pt, Pt][] = [
    [[532, 362], [1207, 305]], [[538, 334], [1213, 277]], [[538, 334], [532, 362]], [[1213, 277], [1207, 305]],
    [[441, 299], [532, 362]], [[447, 270], [441, 299]], [[441, 299], [1116, 240]], [[478, 292], [1153, 233]],
    [[478, 292], [538, 334]], [[447, 270], [1125, 212]], [[457, 274], [1129, 217]], [[447, 270], [457, 274]],
    [[464, 232], [1139, 174]], [[487, 248], [1162, 191]], [[464, 232], [487, 248]], [[464, 232], [457, 274]],
    [[487, 248], [478, 292]], [[1139, 174], [1162, 191]], [[1162, 191], [1153, 233]], [[1153, 233], [1213, 277]],
    [[1116, 240], [1207, 305]], [[1125, 212], [1129, 217]], [[1119, 213], [1117, 240]],
]
const barTops = [489, 505, 529, 534, 551, 565, 569, 592, 609, 625, 628, 655, 672, 686, 689, 716, 731, 746, 772, 776, 802, 808, 820, 840, 854, 858, 885, 900, 915, 932, 946, 976, 979, 1007, 1021, 1036, 1063, 1067, 1096, 1100, 1127, 1141, 1158]
const redY = (x: number) => 376 - 0.0857 * (x - 234)

function Scene() {
    return (
        <svg viewBox="234 168 1132 225" preserveAspectRatio="xMinYMin slice" className="size-full" shapeRendering="crispEdges" role="img" aria-label="三维钢筋视图">
            <path d="M234 376 1366 279M234 297 368 393M811 168 1124 393" stroke="#f00" />
            <path d="M420 168 734 393" stroke="#900000" />
            <g stroke="#9c8e89" strokeWidth="1" fill="none">
                {[0, 1, 2, 3, 4].map((i) => {
                    const dx = i * 16, dy = i * 12
                    return <path key={i} d={`M${460 + dx} ${297 + dy}L${1124 + dx} ${239 + dy}`} />
                })}
                <path d="M469 257 1190 197M478 265 1202 204M450 281 1120 223M539 338 1202 280" />
            </g>
            <g stroke="#9c8e89" strokeWidth="2" fill="none">
                {barTops.map((x) => {
                    const dy = 132 - (x - 489) * 0.085
                    return <path key={x} d={`M${x} 168L${x - dy * 0.215} ${168 + dy}`} />
                })}
            </g>
            <g stroke="#9c8e89" strokeWidth="1.600" fill="none">
                {Array.from({ length: 22 }, (_, i) => {
                    const x = 536 + i * 30.7
                    const y = redY(x)
                    const px = 456 + i * 30.7
                    const py = 280 - i * 2.65
                    return (
                        <Fragment key={i}>
                            <path d={`M${x + 2} ${y - 12}L${x} ${y}L${x - 74} ${y - 53}`} />
                            <path d={`M${px - 4} ${py + 16}L${px} ${py}L${px + 18} ${py + 28}`} />
                        </Fragment>
                    )
                })}
                {Array.from({ length: 16 }, (_, i) => {
                    const x = 574 + i * 39.5
                    return <path key={i} d={`M${x} ${redY(x)}L${x - 92} ${redY(x) - 66}`} />
                })}
                <path d="M1121 223 1202 280 1200 293" />
            </g>
            <path d="M532 351 1200 293" stroke="#9c8e89" strokeDasharray="22 8" />
            {white.map(([a, b], i) => <path key={i} d={`M${a[0]} ${a[1]}L${b[0]} ${b[1]}`} stroke="#fff" strokeWidth="2" />)}
            <g fill="none" stroke="#007a00">
                <circle cx="247" cy="375" r="12" /><circle cx="264" cy="380" r="12" /><circle cx="246" cy="307" r="12" /><circle cx="827" cy="181" r="12" />
            </g>
            <g fill="#d8d8d8" fontFamily="Liberation Sans, sans-serif" fontSize="15" textAnchor="middle">
                <text x="247" y="380">B</text><text x="264" y="385">2</text><text x="827" y="185" fill="#888">7</text>
            </g>
        </svg>
    )
}

function Viewport() {
    return (
        <section className="relative min-h-0 flex-1 overflow-hidden bg-black">
            <Scene />
            <div className="absolute top-0.5 left-2.5 flex h-[179px] w-[167px] flex-col border border-[#555] bg-white">
                <h2 className="h-[31px] pl-[7px] leading-[29px] text-[#999]">钢筋显示控制面板</h2>
                <div className="flex-1 border-2 border-[#828790] pl-0.5">
                    {['水平纵筋', '横向钢筋', '显示其它图元', '显示详细公式'].map((t) => (
                        <label key={t} className="flex h-3 items-center gap-1 leading-3">
                            <input type="checkbox" defaultChecked className="peer sr-only" />
                            <svg viewBox="0 0 11 11" className="size-[11px] shrink-0"><path d="M.5.5h10v10H.5z" fill="#fff" stroke="#888" /><path d="M2.500 5.500 4.500 8l4-5" fill="none" stroke="#333" strokeWidth="1.200" /></svg>
                            {t}
                        </label>
                    ))}
                </div>
            </div>
        </section>
    )
}

function SnapBar() {
    return (
        <div className="flex h-8 shrink-0 gap-0.5 pt-0.5">
            <Bar>
                <Grip />
                <Tools items={[{ icon: 'ortho', label: '正交' }, { icon: 'snap', label: '对象捕捉', on: true }, { icon: 'dyn', label: '动态输入' }]} />
            </Bar>
            <Bar className="pr-px">
                <Grip />
                <Tools items={[{ icon: 'cross', label: '交点' }, { icon: 'perp', label: '垂点', on: true }, { icon: 'mid', label: '中点', on: true }, { icon: 'vertex', label: '顶点' }, { icon: 'coord', label: '坐标' }]} />
            </Bar>
            <Bar className="gap-px pr-1 text-[#7d7d7d]">
                <Grip />
                <Combo label="偏移方式" value="不偏移" className="w-[58px] text-black" />
                <Sep />
                <span className="w-[18px]">X=</span>
                <Spin label="X" value="0" className="w-[58px]" />
                <span className="w-6">mm</span>
                <span className="w-[18px]">Y=</span>
                <Spin label="Y" value="0" className="w-[58px]" />
                <span className="w-6">mm</span>
                <Sep />
                <label className="mr-0.5 flex items-center gap-2 text-black">
                    <input type="checkbox" className="size-[11px] appearance-none border border-[#a8a8a8]" />旋转
                </label>
                <Spin label="角度" value="0.000" className="w-[68px]" />
                <span>°</span>
            </Bar>
        </div>
    )
}

const dimText = { fontFamily: 'Liberation Sans, sans-serif', fontSize: 11 }

const shapeL1 = (
    <svg viewBox="0 0 200 60" className="h-[60px] w-[200px]">
        <path d="M101 5v41M70 51v-4h42v4h-11v-4" fill="none" stroke="#000" strokeWidth="2" />
        <g {...dimText}>
            <text x="80" y="58">554</text><text x="117" y="58">154</text>
            <text transform="translate(114 41) rotate(-90)">267</text><text transform="translate(114 18) rotate(-90)">320</text>
            <text transform="translate(83 49) rotate(-90)">66</text><text transform="translate(107 45) rotate(-90)">29</text>
        </g>
    </svg>
)
const shapeL2 = (
    <svg viewBox="0 0 200 60" className="h-[60px] w-[200px]">
        <path d="M113 5v39l-2 2H78" fill="none" stroke="#000" strokeWidth="2" />
        <g {...dimText}>
            <text x="84" y="59">496</text>
            <text transform="translate(126 38) rotate(-90)">275</text><text transform="translate(126 18) rotate(-90)">320</text>
        </g>
    </svg>
)
const straight = (n: string) => (
    <svg viewBox="0 0 200 28" className="h-7 w-[200px]">
        <path d="M23 19h150" stroke="#000" strokeWidth="2" />
        <text {...dimText} x="101" y="16" fill="#f00" textAnchor="middle">{n}</text>
    </svg>
)

const rows = [
    { no: '1', name: '横向钢筋.1', fig: '0', shape: shapeL1, formula: '1105+40*d', desc: '净长+端头', len: '1425', count: '23', h: 'h-[61px]' },
    { no: '2*', name: '横向钢筋.2', fig: '0', shape: shapeL2, formula: '771+40*d', desc: '净长+端头', len: '1091', count: '18', h: 'h-[61px]' },
    { no: '3', name: '水平纵筋.1', fig: '1', shape: straight('3250'), formula: '3250', desc: '净长', len: '3250', count: '9', h: 'h-[29px]' },
    { no: '4', name: '水平纵筋.2', fig: '1', shape: straight('3515'), formula: '40*d+3275', desc: '锚固长度+净长', len: '3515', count: '2', h: 'h-[29px]' },
    { no: '5', name: '', fig: '', shape: null, formula: '', desc: '', len: '', count: '', h: 'h-[19px]' },
]
const headings = ['筋号', '图号', '图形', '计算公式', '公式描述', '长度(㎜)', '根数', '搭接', '损耗']
const cell = 'border-r border-b border-[#bdbdbd] p-0 pl-0.5'
const num = 'text-[11px]'

function RebarTable() {
    return (
        <table className="w-full table-fixed border-separate border-spacing-0 overflow-hidden font-['Liberation_Sans','Noto_Sans_CJK_SC',sans-serif] leading-4">
            <colgroup>
                <col className="w-[33px]" /><col className="w-[73px]" /><col className="w-[33px]" /><col className="w-[201px]" /><col className="w-[166px]" />
                <col className="w-[156px]" /><col className="w-[61px]" /><col /><col className="w-[39px]" /><col className="w-[26px]" />
            </colgroup>
            <thead>
                <tr className="h-[19px] text-[#550055]">
                    <th aria-label="行号" className={`${cell} bg-[#f4f4f4]`} />
                    {headings.map((h) => <th key={h} className="overflow-hidden border-r border-b border-[#bdbdbd] bg-linear-to-b from-[#fad79b] to-[#f2c062] p-0 font-normal whitespace-nowrap">{h}</th>)}
                </tr>
            </thead>
            <tbody>
                {rows.map((r) => {
                    const current = r.no === '2*'
                    const empty = r.no === '5'
                    return (
                        <tr key={r.no} className={`${r.h} ${empty ? 'bg-white' : current ? 'bg-[#90d7d9]' : 'bg-[#ccffdb]'}`}>
                            <th className={`border-r border-b border-[#bdbdbd] p-0 pr-2 text-center text-[11px] font-normal ${current ? 'bg-[#ffd28c] text-[#550055]' : 'bg-linear-to-r from-white to-[#eee]'}`}>{r.no}</th>
                            <td className={`border-r border-b border-r-black border-b-[#bdbdbd] p-0 pl-0.5 whitespace-nowrap ${current ? 'bg-[#aeecda]' : ''}`}>{r.name}</td>
                            <td className={`${cell} ${num}`}>{r.fig}</td>
                            <td className="border-r border-b border-[#bdbdbd] p-0 [&>svg]:block">{r.shape}</td>
                            <td className={`${cell} ${num}`}>{r.formula}</td>
                            <td className={cell}>{r.desc}</td>
                            <td className={`${cell} ${num}`}>{r.len}</td>
                            <td className={`${cell} ${num}`}>{r.count}</td>
                            <td className={`${cell} ${num}`}>{empty ? '' : '0'}</td>
                            <td className={`border-b border-[#bdbdbd] p-0 pl-0.5 ${num}`}>{empty ? '' : '0'}</td>
                        </tr>
                    )
                })}
            </tbody>
        </table>
    )
}

function DetailPanel() {
    return (
        <section className="flex h-[281px] shrink-0 pr-0.5">
            <div className="flex w-[13px] flex-col items-center gap-0.5 pt-0.5">
                <button aria-label="关闭面板"><svg viewBox="0 0 10 10" className="size-2.5"><path d="M.5.5h9v9h-9z" fill="#e8dede" stroke="#333" /><path d="m2 2 6 6M8 2 2 8" stroke="#222" strokeWidth="1.500" /></svg></button>
                <div className="w-2 flex-1 bg-[radial-gradient(circle,#a8a8a8_1px,transparent_2px)] bg-[size:4px_5px]" />
            </div>
            <div className="flex min-w-0 flex-1 flex-col pt-[3px]">
                <div className="flex h-[25px] shrink-0 items-center bg-linear-to-b from-[#fdfdfd] to-[#f1f1f1]">
                    {[['first', '首条'], ['prev', '上一条'], ['next', '下一条'], ['last', '末条']].map(([icon, label]) => (
                        <button key={icon} aria-label={label} className="flex w-6 justify-center"><Glyph name={icon} /></button>
                    ))}
                    <Sep tight />
                    {[['up', '上移'], ['down', '下移']].map(([icon, label]) => (
                        <button key={icon} aria-label={label} className="flex w-6 justify-center"><Glyph name={icon} /></button>
                    ))}
                    <Tools items={[
                        '|',
                        { icon: 'insert', label: '插入', off: true },
                        { icon: 'remove', label: '删除', off: true },
                        { icon: 'scale', label: '缩尺配筋', off: true },
                        { icon: 'info', label: '钢筋信息' },
                        { icon: 'gallery', label: '钢筋图库' },
                        { icon: 'other', label: '其他', menu: 'tight' },
                        { label: '关闭' },
                        '|',
                    ]} />
                    <span className="ml-1">单构件钢筋总重(kg)：30.136</span>
                </div>
                <div className="flex flex-1 flex-col border border-[#a5a5a5] bg-white pt-px">
                    <RebarTable />
                    <div className="mt-auto flex h-[15px] items-center bg-[#f0f0f0]">
                        <Chevron open className="mx-1 rotate-90" />
                        <div className="h-full flex-1"><div className="ml-[25%] h-full w-[414px] bg-[#cdcdcd]" /></div>
                        <Chevron open className="mx-1 -rotate-90" />
                    </div>
                </div>
            </div>
        </section>
    )
}

function StatusBar() {
    const box = 'border border-[#d5d5d5] bg-linear-to-b from-white to-[#f0f0f0] pl-px'
    return (
        <footer className="flex h-[22px] shrink-0 gap-0.5 bg-white pt-0.5 font-['Liberation_Sans','Noto_Sans_CJK_SC',sans-serif] leading-[18px]">
            <span className={`${box} w-[148px] text-[11px]`}>X=50859 Y=5422</span>
            <span className={`${box} w-[78px]`}>层高:2.8m</span>
            <span className={`${box} w-[98px]`}>底标高:10.27m</span>
            <span className={`${box} w-12`}>1(1)</span>
            <span className={`${box} flex-1`} />
        </footer>
    )
}

function Sogou({ className }: { className: string }) {
    return <svg viewBox="0 0 28 28" className={className} aria-hidden="true"><rect x="2" y="2" width="24" height="24" rx="4" fill="#f4511e" transform="rotate(-10 14 14)" /><path d="M21 8C14 5.500 7 7 8 11c1 3.500 11 2 11.500 5.500C20 20 12 21 7 18.500" fill="none" stroke="#fff" strokeWidth="3.500" /></svg>
}

function ImeBar() {
    return (
        <div className="absolute right-0 bottom-10 flex h-6 w-[176px] items-center justify-between border border-[#b6c8d8] bg-white pr-1 pl-6 text-[#1f74c8]">
            <Sogou className="absolute -top-1 -left-2.5 size-7" />
            <b className="text-sm leading-4">中</b>
            <svg viewBox="0 0 14 14" className="size-3.5"><circle cx="4" cy="5" r="2" fill="none" stroke="#1f74c8" strokeWidth="1.400" /><path d="M9 7h3v3l-2 3h-1l1-3H9z" fill="#1f74c8" /></svg>
            <svg viewBox="0 0 14 16" className="h-4 w-3.5"><rect x="4" width="6" height="10" rx="3" fill="#1f74c8" /><path d="M2 6c0 8 10 8 10 0M7 12v3M4 15h6" fill="none" stroke="#1f74c8" strokeWidth="1.500" /></svg>
            <svg viewBox="0 0 16 12" className="h-3 w-4"><rect width="16" height="12" rx="1" fill="#1f74c8" /><path d="M2 3h12M2 6h12" stroke="#fff" strokeWidth="1.500" strokeDasharray="1.500 1" /><path d="M4 9.500h8" stroke="#fff" strokeWidth="1.500" /></svg>
            <svg viewBox="0 0 16 16" className="size-4"><circle cx="6" cy="4" r="3" fill="#b4bfd4" /><path d="M0 14c0-9 12-9 12 0z" fill="#b4bfd4" /><text x="6" y="15" fontSize="8" fontWeight="bold" fontFamily="Liberation Sans" fill="#8c9bb5">17</text></svg>
            <svg viewBox="0 0 14 14" className="size-3.5"><path d="m4 1 3 1.500L10 1l4 3-1.500 3L11 6.500V13H3V6.500L1.500 7 0 4z" fill="#1f74c8" /></svg>
            <svg viewBox="0 0 14 14" className="size-3.5"><path d="m2 12 6-6" stroke="#1f74c8" strokeWidth="3" strokeLinecap="round" /><path d="M13 4.500 10.500 5 9 3.500 9.500 1C7 .5 5.500 3 6.500 5.500L8.500 7.500C11 8.500 13.500 7 13 4.500z" fill="#1f74c8" /></svg>
        </div>
    )
}

const apps: { name: string; art: ReactNode; state?: 'open' | 'active' }[] = [
    { name: '风扇', art: <g fill="#ececec"><path d="M11 11C6 12 1 10 2 5s8-4 9 0z" /><path d="M13 11c-1-5 1-10 6-9s4 8 0 9z" /><path d="M13 13c5-1 10 1 9 6s-8 4-9 0z" /><path d="M11 13c1 5-1 10-6 9s-4-8 0-9z" /></g> },
    { name: '提醒', art: <><path d="M15 5C8 1 1 6 1 13s5 9 11 8 7-8 3-10-9-1-8 4 7 3 6-1" fill="none" stroke="#d0d0d0" strokeWidth="1.500" /><path d="M14 7c1-1 1.500-2 1.500-4.500C15.500 0 17-1 18.500-1S21.500 0 21.500 2.500C21.500 5 22 6 24 7z" fill="#e9a800" /><circle cx="19" cy="8" r="1.700" fill="#e9a800" /></> },
    { name: 'Edge', art: <path d="M2 11C3 4 8 1 13 1c6 0 9 5 9 11H9c0 5 7 6 12 3v5C12 25 3 21 4 13c1-3 3-5 6-6-1 1-1.500 2-1.500 2.500H16C16 3 7 4 2 11z" fill="#0b78d7" /> },
    { name: '应用商店', art: <><path d="M2 7 22 4v19L2 20z" fill="#fff" /><path d="M6 6c0-7 10-7 11-1M9 5c1-5 8-5 9-1" fill="none" stroke="#fff" strokeWidth="1.300" /><path d="m6 11 4.500-.5v4H6zM12 10.300l5-.5v4.700h-5zM6 16h4.500v4L6 19.500zM12 16h5v4.500l-5-.5z" fill="#000a0f" /></> },
    { name: '文件资源管理器', art: <><path d="M1 3h8l1 2h13v16H1z" fill="#fbe08f" /><path d="M1 3h8v3H1z" fill="#e8bb4c" /><path d="M5 13h14v8h-4v-4H9v4H5z" fill="#3fa9e0" /></> },
    { name: '360浏览器', state: 'open', art: <><circle cx="12" cy="12" r="10.500" fill="#fff" /><circle cx="12" cy="12" r="9.500" fill="#4db52a" /><path d="M6 13h13c0-9-12-9-13-1s9 8 12 4" fill="none" stroke="#fff" strokeWidth="3" /><path d="M3 20C8 8 15 3 22 1" fill="none" stroke="#84cf4d" strokeWidth="1.500" /></> },
    { name: '广联达', state: 'active', art: <><rect width="24" height="24" rx="4" fill="#1296f3" /><path d="M12 5v12c0 3-4 3-4 0M5 14c-1-2 0-3 2-3h10c3 0 3 4 0 4M9.500 7.500 12 5l2.500 2.500" fill="none" stroke="#fff" strokeWidth="2" /></> },
    { name: 'G浏览器', state: 'open', art: <path d="M23 2c-2 2-4 2-6 1-3-2-8-2-11 1-6 5-5 14 1 18 6 3 14 1 15-6 0-3-1-5-4-5-2 0-4 1-6 1 3 0 4 2 3 4-2 3-7 2-8-2 0-5 5-8 9-7 4 0 7-2 7-5z" fill="#1b9df1" /> },
    { name: '写字板', state: 'open', art: <><rect width="24" height="24" rx="2" fill="#f2a51f" /><rect x="2" y="2" width="20" height="20" fill="#fbd56f" /><path d="m2 8 12-3 4 14-12 3z" fill="#fff" stroke="#c9a968" /><path d="m5 11 8-2M6 14l8-2M7 17l8-2" stroke="#888" /><path d="M21 1 12 13" stroke="#8c3a12" strokeWidth="3" /></> },
]

function Taskbar() {
    return (
        <nav className="flex h-10 shrink-0 items-stretch bg-[#000b10] text-white">
            <button aria-label="开始" className="flex w-12 items-center justify-center bg-black">
                <svg viewBox="0 0 16 16" className="size-4"><path d="m0 2.200 6.500-.9v6.200H0zM7.300 1.200 16 0v7.500H7.300zM0 8.300h6.500v6.300L0 13.700zM7.300 8.300H16V16l-8.700-1.200z" fill="#fff" /></svg>
            </button>
            <label className="flex w-[344px] items-center bg-[#333] pr-3.5 pl-2">
                <svg viewBox="0 0 22 22" className="size-[22px]"><circle cx="11" cy="11" r="9" fill="none" stroke="#fff" strokeWidth="2.600" /></svg>
                <input aria-label="搜索" placeholder="在这里输入你要搜索的内容" className="ml-1.5 min-w-0 flex-1 bg-transparent text-sm outline-none placeholder:text-[#9a9a9a]" />
                <svg viewBox="0 0 12 16" className="h-4 w-3"><rect x="3.500" y=".5" width="5" height="10" rx="1.500" fill="none" stroke="#a5a5a5" /><path d="M1 8v4.500h10V8M6 12.500V15M3 15.500h6" fill="none" stroke="#a5a5a5" /></svg>
            </label>
            <div className="flex gap-px pl-1">
                {apps.map((a) => (
                    <button key={a.name} aria-label={a.name} className={`flex w-12 flex-col items-center justify-between pt-2 ${a.state === 'active' ? 'bg-[#33393c]' : ''}`}>
                        <svg viewBox="0 0 24 24" className="size-6">{a.art}</svg>
                        {a.state && <i className={`h-0.5 bg-[#76b9ed] ${a.state === 'active' ? 'w-full' : 'w-10'}`} />}
                    </button>
                ))}
            </div>
            <div className="ml-auto flex items-center text-center leading-[17px]">
                <div className="mr-5 w-14">35%<br />CPU使用</div>
                <div className="flex items-center gap-2">
                    <button aria-label="显示隐藏的图标"><svg viewBox="0 0 12 8" className="h-2 w-3"><path d="m.5 7 5.500-5.500L11.500 7" fill="none" stroke="#fff" /></svg></button>
                    <svg viewBox="0 0 17 14" className="h-3.5 w-[17px]"><path d="M5.500 4.500h9v7h-9zM16 6.500v3M1 2v3h4V2M2 0v2M4 0v2M3 5v6h2" fill="none" stroke="#fff" /><path d="M7 6h6v4H7z" fill="#fff" /></svg>
                    <svg viewBox="0 0 14 14" className="size-3.5"><path d="M1 12C1 6 6 1 12 1M4 13c0-5 4-8 9-8M7 13c0-3 3-5 6-5" fill="none" stroke="#ccc" /><circle cx="11.500" cy="12" r="1.500" fill="#fff" /></svg>
                    <svg viewBox="0 0 16 14" className="h-3.5 w-4"><path d="M1 5h2.500L7 2v10L3.500 9H1z" fill="none" stroke="#fff" /><path d="M9 5c1 1 1 3 0 4M11 3.500c2 2 2 5 0 7M13 2c3 3 3 7 0 10" fill="none" stroke="#bbb" /></svg>
                    <b className="text-sm">中</b>
                    <Sogou className="ml-1 size-[18px]" />
                </div>
                <time className="mr-1 ml-3 w-[67px]">16:00<br />2017/8/19</time>
            </div>
            <button aria-label="操作中心" className="relative flex w-[50px] items-center justify-center bg-black pr-2">
                <svg viewBox="0 0 16 16" className="size-4"><path d="M0 0h16v12H7l-4 4v-4H0z" fill="#fff" /><path d="M3 3h10M3 6h10M3 9h6" stroke="#000" /></svg>
                <span className="absolute right-3.5 bottom-1 size-4 rounded-full bg-[#4b4b4b] text-[13px] leading-4">4</span>
            </button>
            <i className="w-1 border-l border-[#555] bg-black" />
        </nav>
    )
}

export default function App() {
    return (
        <div className="relative flex h-screen w-full flex-col overflow-hidden bg-[#f0f0f0] font-['Noto_Sans','Noto_Sans_CJK_SC',sans-serif] text-xs whitespace-nowrap text-black">
            <TitleBar />
            <AccountRow />
            <MainToolbar />
            <div className="flex min-h-0 flex-1 gap-[5px]">
                <Sidebar />
                <main className="flex min-w-0 flex-1 flex-col">
                    <EditToolbars />
                    <Viewport />
                    <SnapBar />
                    <DetailPanel />
                </main>
            </div>
            <StatusBar />
            <Taskbar />
            <ImeBar />
            <div className="absolute -top-7 right-[369px] flex size-12 items-end justify-center rounded-full border-2 border-[#c9c9c9] bg-[#3fc15f] pb-0.5 font-bold text-white shadow-lg">73</div>
        </div>
    )
}
